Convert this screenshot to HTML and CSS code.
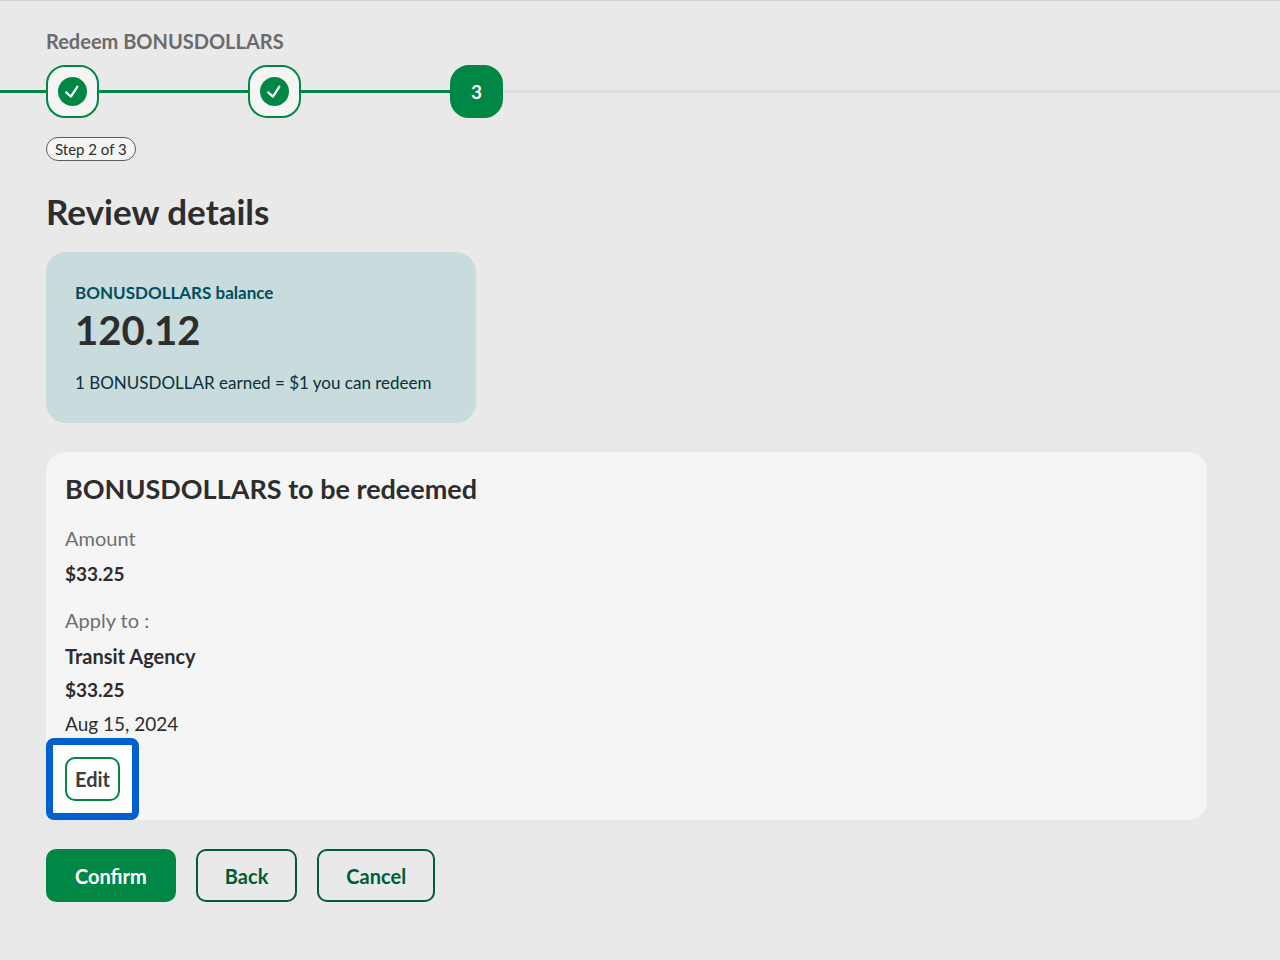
FILE: index.html
```html
<!DOCTYPE html>
<html lang="en">

<head>
    <meta charset="UTF-8">
    <meta name="viewport" content="width=device-width, initial-scale=1.0">
    <title>Redeem BONUSDOLLARS</title>
    <link rel="stylesheet" href="styles.css">
</head>

<body>
    <header>
        <p class="flow-title">Redeem BONUSDOLLARS</p>
        <!-- Progress steps -->
        <ol class="stepper">
            <li class="step done" aria-label="Step 1 complete">
                <svg class="check" viewBox="0 0 29 29" aria-hidden="true">
                    <circle cx="14.5" cy="14.5" r="14.5" />
                    <path d="M8.2 15.4 L12.9 19.6 L19.4 9.6" />
                </svg>
            </li>
            <li class="step done" aria-label="Step 2 complete">
                <svg class="check" viewBox="0 0 29 29" aria-hidden="true">
                    <circle cx="14.5" cy="14.5" r="14.5" />
                    <path d="M8.2 15.4 L12.9 19.6 L19.4 9.6" />
                </svg>
            </li>
            <li class="step current" aria-current="step">3</li>
        </ol>
    </header>

    <main>
        <span class="step-pill">Step 2 of 3</span>
        <h1>Review details</h1>

        <!-- Balance -->
        <section class="balance-card">
            <h2>BONUSDOLLARS balance</h2>
            <p class="balance">120.12</p>
            <p class="rate">1 BONUSDOLLAR earned = $1 you can redeem</p>
        </section>

        <!-- Redemption summary -->
        <section class="summary-card">
            <h2>BONUSDOLLARS to be redeemed</h2>
            <dl>
                <div class="detail">
                    <dt>Amount</dt>
                    <dd class="strong figure">$33.25</dd>
                </div>
                <div class="detail">
                    <dt>Apply to :</dt>
                    <dd class="strong">Transit Agency</dd>
                    <dd class="strong figure">$33.25</dd>
                    <dd class="figure">Aug 15, 2024</dd>
                </div>
            </dl>
            <div class="highlight">
                <button type="button" class="btn-edit">Edit</button>
            </div>
        </section>

        <div class="actions">
            <button type="button" class="btn btn-primary">Confirm</button>
            <button type="button" class="btn">Back</button>
            <button type="button" class="btn">Cancel</button>
        </div>
    </main>
</body>

</html>
```

FILE: styles.css
```css
* {
    box-sizing: border-box;
}

body {
    margin: 0;
    min-height: 100vh;
    font-family: Lato, 'Liberation Sans', sans-serif;
    font-size: 20px;
    color: #2d2d2d;
    background-color: #e9e9e9;
    border-top: 1px solid #cfcfcf;
}

h1,
h2,
p,
dl,
dd,
ol {
    margin: 0;
    padding: 0;
}

button {
    font-family: inherit;
    font-size: 20px;
    font-weight: bold;
    cursor: pointer;
}

/* Header and stepper */
.flow-title {
    margin: 27px 46px 11px;
    line-height: 26px;
    font-weight: bold;
    color: #6b6b6b;
}

.stepper {
    display: flex;
    align-items: center;
    list-style: none;
}

.stepper::before,
.stepper::after {
    content: "";
    height: 3px;
    width: 46px;
    background-color: #008746;
}

.stepper::after {
    flex: 1;
    background-color: #dedede;
}

.step {
    display: flex;
    align-items: center;
    justify-content: center;
    width: 53px;
    height: 53px;
    border: 2px solid #008746;
    border-radius: 19px;
    background-color: #f5f5f5;
}

/* Line to the next step */
.step.done {
    position: relative;
    margin-right: 149px;
}

.step.done::after {
    content: "";
    position: absolute;
    top: 23px;
    left: 51px;
    width: 149px;
    height: 3px;
    background-color: #008746;
}

.step.current {
    background-color: #008746;
    color: white;
    font-size: 19px;
    font-weight: bold;
}

.check {
    width: 29px;
    height: 29px;
}

.check circle {
    fill: #008746;
}

.check path {
    fill: none;
    stroke: white;
    stroke-width: 2.2;
    stroke-linecap: round;
    stroke-linejoin: round;
}

/* Content */
main {
    padding: 19px 73px 40px 46px;
}

.step-pill {
    display: block;
    width: fit-content;
    padding: 0 8px;
    border: 1px solid #5c5c5c;
    border-radius: 12px;
    background-color: #f5f5f5;
    font-size: 15px;
    line-height: 22px;
}

h1 {
    margin: 28px 0 19px;
    font-size: 35px;
    line-height: 44px;
}

.balance-card {
    max-width: 430px;
    padding: 29px 29px 28px;
    border-radius: 20px;
    background-color: #c8dbdd;
}

.balance-card h2 {
    font-size: 17px;
    line-height: 24px;
    color: #004f5e;
}

.balance {
    font-size: 40px;
    font-weight: bold;
    line-height: 50px;
}

.rate {
    margin-top: 16px;
    font-size: 17px;
    line-height: 24px;
    color: #0b3038;
}

.summary-card {
    margin-top: 29px;
    padding: 19px 19px 0;
    border-radius: 20px;
    background-color: #f5f5f5;
}

.summary-card h2 {
    margin-bottom: 14px;
    font-size: 27px;
    line-height: 36px;
}

.detail {
    margin-bottom: 12px;
    line-height: 34px;
}

.detail:last-child {
    margin-bottom: 0;
}

.detail dt {
    margin-bottom: 2px;
    color: #6f6f6f;
}

.strong {
    font-weight: bold;
}

.figure {
    font-size: 19px;
}

/* Highlight around the edit button */
.highlight {
    width: fit-content;
    margin: -3px 0 -1px -19px;
    padding: 12px;
    border: 7px solid #0060d0;
    border-radius: 8px;
    background-color: white;
}

.btn-edit {
    display: block;
    height: 44px;
    padding: 0 8px;
    border: 2px solid #008746;
    border-radius: 10px;
    background-color: white;
    color: #3c3c3c;
}

.actions {
    display: flex;
    flex-wrap: wrap;
    gap: 20px;
    margin-top: 30px;
}

.btn {
    height: 53px;
    padding: 0 27px;
    border: 2px solid #005c35;
    border-radius: 10px;
    background-color: transparent;
    color: #005c35;
}

.btn-primary {
    border-color: #008746;
    background-color: #008746;
    color: white;
}
```
